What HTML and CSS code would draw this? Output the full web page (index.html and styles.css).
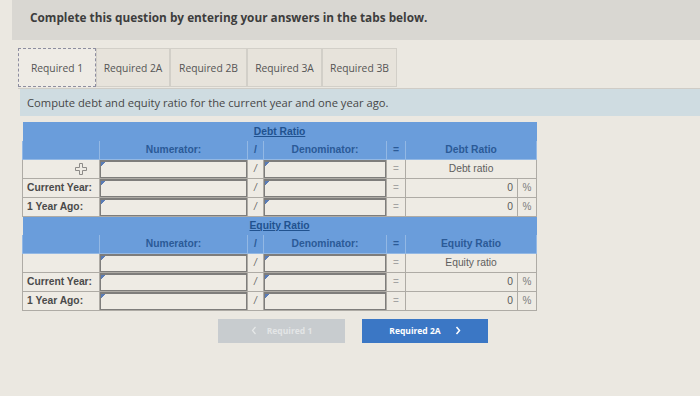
FILE: index.html
```html
<!DOCTYPE html>
<html lang="en">
<head>
    <meta charset="UTF-8">
    <meta name="viewport" content="width=device-width, initial-scale=1.0">
    <title>Debt and Equity Ratio</title>
    <link rel="stylesheet" href="styles.css">
</head>
<body>
    <div class="page">
        <div class="banner">
            <h1 class="banner-title">Complete this question by entering your answers in the tabs below.</h1>
        </div>

        <ul class="tabs">
            <li class="tab tab-active">Required 1</li>
            <li class="tab tab-2a">Required 2A</li>
            <li class="tab tab-2b">Required 2B</li>
            <li class="tab tab-3a">Required 3A</li>
            <li class="tab tab-3b">Required 3B</li>
        </ul>

        <div class="prompt">Compute debt and equity ratio for the current year and one year ago.</div>

        <table class="ratio-table">
            <colgroup>
                <col class="col-label">
                <col class="col-num">
                <col class="col-op">
                <col class="col-den">
                <col class="col-eq">
                <col class="col-val">
                <col class="col-pct">
            </colgroup>
            <tbody>
                <tr class="title-row">
                    <th colspan="7"><span>Debt Ratio</span></th>
                </tr>
                <tr class="head-row">
                    <th></th>
                    <th>Numerator:</th>
                    <th>/</th>
                    <th>Denominator:</th>
                    <th>=</th>
                    <th colspan="2">Debt Ratio</th>
                </tr>
                <tr>
                    <td class="label label-icon">
                        <svg width="12" height="12" viewBox="0 0 12 12">
                            <path d="M4.5 0.5h3v4h4v3h-4v4h-3v-4h-4v-3h4z" fill="none" stroke="#8d8b88" stroke-width="1"/>
                        </svg>
                    </td>
                    <td class="field"><input type="text"></td>
                    <td class="op">/</td>
                    <td class="field"><input type="text"></td>
                    <td class="op eq">=</td>
                    <td class="result-name" colspan="2">Debt ratio</td>
                </tr>
                <tr>
                    <td class="label">Current Year:</td>
                    <td class="field"><input type="text"></td>
                    <td class="op">/</td>
                    <td class="field"><input type="text"></td>
                    <td class="op eq">=</td>
                    <td class="value">0</td>
                    <td class="pct">%</td>
                </tr>
                <tr>
                    <td class="label">1 Year Ago:</td>
                    <td class="field"><input type="text"></td>
                    <td class="op">/</td>
                    <td class="field"><input type="text"></td>
                    <td class="op eq">=</td>
                    <td class="value">0</td>
                    <td class="pct">%</td>
                </tr>
            </tbody>
            <tbody>
                <tr class="title-row">
                    <th colspan="7"><span>Equity Ratio</span></th>
                </tr>
                <tr class="head-row">
                    <th></th>
                    <th>Numerator:</th>
                    <th>/</th>
                    <th>Denominator:</th>
                    <th>=</th>
                    <th colspan="2">Equity Ratio</th>
                </tr>
                <tr>
                    <td class="label"></td>
                    <td class="field"><input type="text"></td>
                    <td class="op">/</td>
                    <td class="field"><input type="text"></td>
                    <td class="op eq">=</td>
                    <td class="result-name" colspan="2">Equity ratio</td>
                </tr>
                <tr>
                    <td class="label">Current Year:</td>
                    <td class="field"><input type="text"></td>
                    <td class="op">/</td>
                    <td class="field"><input type="text"></td>
                    <td class="op eq">=</td>
                    <td class="value">0</td>
                    <td class="pct">%</td>
                </tr>
                <tr>
                    <td class="label">1 Year Ago:</td>
                    <td class="field"><input type="text"></td>
                    <td class="op">/</td>
                    <td class="field"><input type="text"></td>
                    <td class="op eq">=</td>
                    <td class="value">0</td>
                    <td class="pct">%</td>
                </tr>
            </tbody>
        </table>

        <div class="nav-buttons">
            <button class="btn btn-prev" disabled>
                <svg width="6" height="9" viewBox="0 0 6 9"><polyline points="4.5,1 1.5,4.5 4.5,8" fill="none" stroke="#e6e8e8" stroke-width="1.2"/></svg>
                <span>Required 1</span>
            </button>
            <button class="btn btn-next">
                <span>Required 2A</span>
                <svg width="6" height="9" viewBox="0 0 6 9"><polyline points="1.5,1 4.5,4.5 1.5,8" fill="none" stroke="#ffffff" stroke-width="1.5"/></svg>
            </button>
        </div>
    </div>
</body>
</html>
```

FILE: styles.css
```css
body {
    margin: 0;
    padding: 0;
    background-color: #ebe8e1;
    font-family: 'Open Sans', 'Liberation Sans', sans-serif;
    color: #444;
}

.page {
    width: 700px;
    height: 396px;
    overflow: hidden;
}

.banner {
    margin-left: 12px;
    height: 40px;
    background-color: #d9d7d2;
    padding: 9px 0 0 18px;
    box-sizing: border-box;
}

.banner-title {
    margin: 0;
    font-size: 11.8px;
    font-weight: bold;
    color: #3d3d3d;
}

.tabs {
    list-style: none;
    margin: 8px 0 0 18px;
    padding: 0;
    display: flex;
    height: 40px;
    border-bottom: 1px solid #cfccc6;
}

.tab {
    box-sizing: border-box;
    height: 39px;
    border: 1px solid #d2cfc8;
    background-color: #e7e3db;
    font-size: 10.3px;
    color: #555;
    display: flex;
    align-items: center;
    justify-content: center;
}

.tab-active {
    width: 78px;
    border: 1px dashed #8e8ea0;
    background-color: #eeebe5;
}

.tab-2a { width: 74px; }
.tab-2b { width: 77px; }
.tab-3a { width: 75px; }
.tab-3b { width: 75px; }

.prompt {
    margin-left: 20px;
    height: 27px;
    line-height: 27px;
    padding-left: 7px;
    background-color: #cfdce1;
    font-size: 11.2px;
    color: #474747;
}

.ratio-table {
    margin: 6px 0 0 22px;
    width: 514px;
    border-collapse: collapse;
    table-layout: fixed;
    font-family: 'Liberation Sans', Arial, sans-serif;
    font-size: 10px;
}

.col-label { width: 77px; }
.col-num { width: 148px; }
.col-op { width: 16px; }
.col-den { width: 123px; }
.col-eq { width: 19px; }
.col-val { width: 112px; }
.col-pct { width: 19px; }

.ratio-table th,
.ratio-table td {
    padding: 0;
    height: 19px;
    box-sizing: border-box;
}

.title-row th {
    background-color: #6a9ddb;
    height: 19px;
    text-align: center;
}

.title-row span {
    color: #21528f;
    font-weight: bold;
    text-decoration: underline;
    font-size: 10.3px;
}

.head-row th {
    background-color: #6a9ddb;
    border: 1px solid #93b8e4;
    border-top: none;
    height: 18px;
    color: #2b5a97;
    font-weight: bold;
    font-size: 10.3px;
}

.ratio-table td {
    background-color: #eeebe4;
    border: 1px solid #aeaba5;
}

.label {
    text-align: left;
    padding-left: 4px !important;
    font-weight: bold;
    color: #4a4a4a;
    font-size: 10.3px;
}

.label-icon {
    text-align: right;
    padding-right: 12px !important;
}

.label-icon svg {
    display: block;
    margin-left: auto;
}

.field input {
    display: block;
    width: 100%;
    height: 18px;
    margin: 0;
    box-sizing: border-box;
    border: 1px solid #7e7d7b;
    border-top-width: 2px;
    background: linear-gradient(135deg, #5a7cb6 3px, transparent 3px) #eeebe4;
    font-size: 10px;
}

.op {
    text-align: center;
    color: #666;
    font-style: italic;
}

.eq {
    font-style: normal;
    color: #a3a3a3;
}

.result-name {
    text-align: center;
    color: #5e5e5e;
    font-size: 10.3px;
}

.value {
    text-align: right;
    padding-right: 4px !important;
    color: #5a5a5a;
    font-size: 10.3px;
}

.pct {
    text-align: center;
    color: #7b7b7b;
    font-size: 10px;
}

.nav-buttons {
    display: flex;
    gap: 17px;
    margin: 8px 0 0 218px;
}

.btn {
    height: 24px;
    border: none;
    display: flex;
    align-items: center;
    justify-content: center;
    gap: 10px;
    font-family: 'Open Sans', 'Liberation Sans', sans-serif;
    font-size: 8.5px;
    font-weight: bold;
    padding: 0;
}

.btn-prev {
    width: 127px;
    background-color: #c8cccf;
    color: #e3e5e6;
}

.btn-next {
    width: 126px;
    background-color: #3b77c5;
    color: #ffffff;
    gap: 14px;
}
```
